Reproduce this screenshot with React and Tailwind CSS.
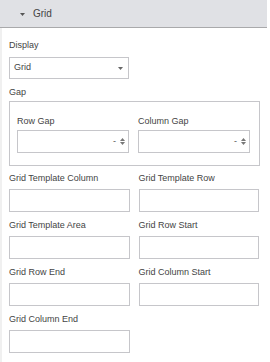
import { useState } from "react";

function Field({ label }) {
  return (
    <div className="flex flex-col">
      <label className="text-[9px] leading-[11px] text-[#444] mb-[5px]">{label}</label>
      <input className="h-[23px] w-full border border-[#c6c6ca] bg-white outline-none" />
    </div>
  );
}

function NumberBox({ label }) {
  return (
    <div className="flex flex-col">
      <label className="text-[9px] leading-[11px] text-[#444] mb-[3px]">{label}</label>
      <div className="h-[23px] w-full border border-[#c6c6ca] bg-white flex items-center justify-end pr-[3px]">
        <span className="text-[9px] leading-none text-[#555] mr-[4px]">-</span>
        <div className="flex flex-col gap-[1px]">
          <svg width="5" height="3" viewBox="0 0 5 3">
            <path d="M0 3 L2.5 0 L5 3 Z" fill="#777" />
          </svg>
          <svg width="5" height="3" viewBox="0 0 5 3">
            <path d="M0 0 L5 0 L2.5 3 Z" fill="#777" />
          </svg>
        </div>
      </div>
    </div>
  );
}

export default function App() {
  const [open, setOpen] = useState(true);

  return (
    <div className="w-[270px] h-[362px] bg-white overflow-hidden" style={{ fontFamily: '"Liberation Sans", Arial, sans-serif' }}>
      <div
        className="w-[267px] h-[28px] bg-[#e0e1e5] border-b border-[#a9a9ab] flex items-center pl-[20px] cursor-pointer"
        onClick={() => setOpen(!open)}
      >
        <svg width="5" height="3" viewBox="0 0 5 3" className="mr-[8px] mt-[2px]">
          <path d="M0 0 L5 0 L2.5 3 Z" fill="#555" />
        </svg>
        <span className="text-[10px] text-[#444]">Grid</span>
      </div>

      {open && (
        <div className="border-l-2 border-[#f0f0f0] h-[334px] pl-[7px] pr-[11px] pt-[12px]">
          <label className="block text-[9px] leading-[11px] text-[#444] mb-[6px]">Display</label>
          <div className="w-[120px] h-[22px] border border-[#c6c6ca] flex items-center justify-between pl-[4px] pr-[5px]">
            <span className="text-[9px] text-[#444]">Grid</span>
            <svg width="5" height="3" viewBox="0 0 5 3">
              <path d="M0 0 L5 0 L2.5 3 Z" fill="#666" />
            </svg>
          </div>

          <label className="block text-[9px] leading-[11px] text-[#444] mt-[8px] mb-[3px]">Gap</label>
          <div className="w-[251px] border border-[#c6c6ca] pl-[7px] pr-[9px] pt-[14px] pb-[12px] grid grid-cols-2 gap-x-[9px]">
            <NumberBox label="Row Gap" />
            <NumberBox label="Column Gap" />
          </div>

          <div className="grid grid-cols-2 gap-x-[9px] gap-y-[8px] mt-[7px]">
            <Field label="Grid Template Column" />
            <Field label="Grid Template Row" />
            <Field label="Grid Template Area" />
            <Field label="Grid Row Start" />
            <Field label="Grid Row End" />
            <Field label="Grid Column Start" />
            <Field label="Grid Column End" />
          </div>
        </div>
      )}
    </div>
  );
}
